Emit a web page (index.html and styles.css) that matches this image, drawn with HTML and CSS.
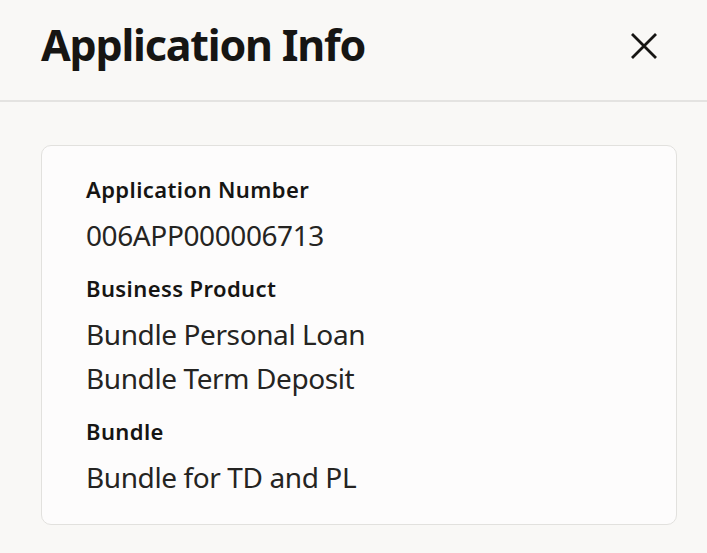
FILE: index.html
```html
<!DOCTYPE html>
<html>
<head>
<meta charset="utf-8">
<link rel="stylesheet" href="styles.css">
</head>
<body>
<div class="panel">
  <header class="header">
    <h1 class="title">Application Info</h1>
    <button class="close" aria-label="Close">
      <svg width="28" height="28" viewBox="0 0 28 28"><path d="M2 2 L26 26 M26 2 L2 26" stroke="#161513" stroke-width="2.8" fill="none"/></svg>
    </button>
  </header>
  <main class="body">
    <section class="card">
      <div class="group">
        <div class="label">Application Number</div>
        <div class="value">006APP000006713</div>
      </div>
      <div class="group">
        <div class="label">Business Product</div>
        <div class="value">Bundle Personal Loan</div>
        <div class="value">Bundle Term Deposit</div>
      </div>
      <div class="group">
        <div class="label">Bundle</div>
        <div class="value">Bundle for TD and PL</div>
      </div>
    </section>
  </main>
</div>
</body>
</html>
```
FILE: styles.css
```css
html, body { margin: 0; padding: 0; }
body {
  background: #f9f8f6;
  font-family: "Noto Sans", sans-serif;
  color: #161513;
  width: 707px;
  height: 553px;
  overflow: hidden;
}
.header {
  height: 100px;
  border-bottom: 2px solid #e4e3e1;
  display: flex;
  align-items: flex-start;
  justify-content: space-between;
  padding: 16px 49px 0 41px;
  box-sizing: content-box;
  height: 84px;
}
.title {
  margin: 0;
  font-size: 43px;
  line-height: 58px;
  font-weight: 700;
  letter-spacing: -1.2px;
}
.close {
  background: none;
  border: 0;
  padding: 0;
  margin-top: 16px;
  width: 28px;
  height: 28px;
  display: flex;
}
.body { padding: 43px 30px 0 41px; }
.card {
  background: #fdfcfc;
  border: 1px solid #e2e1de;
  border-radius: 10px;
  padding: 28px 44px 0 44px;
  height: 380px;
  box-sizing: border-box;
}
.group + .group { margin-top: 16px; }
.label {
  font-size: 22px;
  font-weight: 600;
  line-height: 30px;
  letter-spacing: 0.4px;
  margin-bottom: 9px;
}
.value {
  font-size: 28px;
  line-height: 44px;
  letter-spacing: -0.4px;
  color: #252422;
}
```
